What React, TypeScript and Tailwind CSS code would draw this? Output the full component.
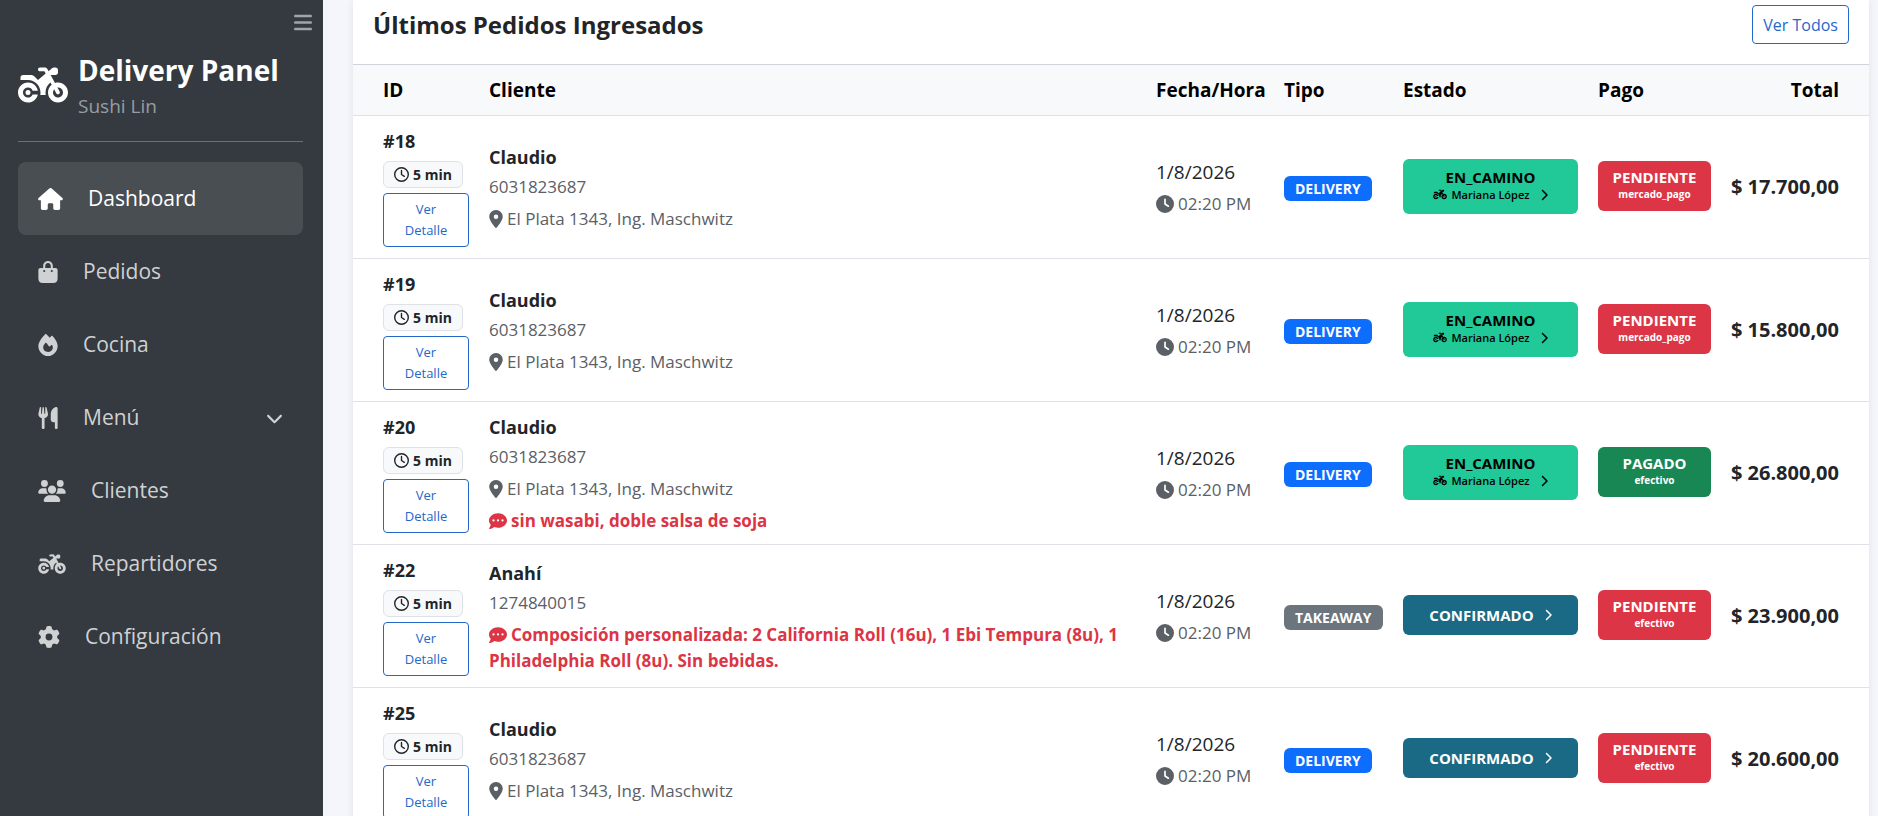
import {
  FaBagShopping,
  FaBars,
  FaChevronDown,
  FaChevronRight,
  FaClock,
  FaCommentDots,
  FaFire,
  FaGear,
  FaHouse,
  FaLocationDot,
  FaMotorcycle,
  FaRegClock,
  FaUsers,
  FaUtensils,
} from "react-icons/fa6"
import type { IconType } from "react-icons"

type MenuItem = {
  label: string
  href: string
  icon: IconType
  iconClass: string
  active?: boolean
  expandable?: boolean
}

type Order = {
  id: number
  client: string
  phone: string
  address?: string
  note?: string
  type: "DELIVERY" | "TAKEAWAY"
  status: "EN_CAMINO" | "CONFIRMADO"
  rider?: string
  payment: "PENDIENTE" | "PAGADO"
  method: string
  total: string
}

const menu: MenuItem[] = [
  { label: "Dashboard", href: "#dashboard", icon: FaHouse, iconClass: "w-[25px]", active: true },
  { label: "Pedidos", href: "#pedidos", icon: FaBagShopping, iconClass: "w-5" },
  { label: "Cocina", href: "#cocina", icon: FaFire, iconClass: "w-5" },
  { label: "Menú", href: "#menu", icon: FaUtensils, iconClass: "w-5", expandable: true },
  { label: "Clientes", href: "#clientes", icon: FaUsers, iconClass: "w-7" },
  { label: "Repartidores", href: "#repartidores", icon: FaMotorcycle, iconClass: "w-7" },
  { label: "Configuración", href: "#configuracion", icon: FaGear, iconClass: "w-[22px]" },
]

const orders: Order[] = [
  {
    id: 18,
    client: "Claudio",
    phone: "6031823687",
    address: "El Plata 1343, Ing. Maschwitz",
    type: "DELIVERY",
    status: "EN_CAMINO",
    rider: "Mariana López",
    payment: "PENDIENTE",
    method: "mercado_pago",
    total: "$ 17.700,00",
  },
  {
    id: 19,
    client: "Claudio",
    phone: "6031823687",
    address: "El Plata 1343, Ing. Maschwitz",
    type: "DELIVERY",
    status: "EN_CAMINO",
    rider: "Mariana López",
    payment: "PENDIENTE",
    method: "mercado_pago",
    total: "$ 15.800,00",
  },
  {
    id: 20,
    client: "Claudio",
    phone: "6031823687",
    address: "El Plata 1343, Ing. Maschwitz",
    note: "sin wasabi, doble salsa de soja",
    type: "DELIVERY",
    status: "EN_CAMINO",
    rider: "Mariana López",
    payment: "PAGADO",
    method: "efectivo",
    total: "$ 26.800,00",
  },
  {
    id: 22,
    client: "Anahí",
    phone: "1274840015",
    note: "Composición personalizada: 2 California Roll (16u), 1 Ebi Tempura (8u), 1 Philadelphia Roll (8u). Sin bebidas.",
    type: "TAKEAWAY",
    status: "CONFIRMADO",
    payment: "PENDIENTE",
    method: "efectivo",
    total: "$ 23.900,00",
  },
  {
    id: 25,
    client: "Claudio",
    phone: "6031823687",
    address: "El Plata 1343, Ing. Maschwitz",
    type: "DELIVERY",
    status: "CONFIRMADO",
    payment: "PENDIENTE",
    method: "efectivo",
    total: "$ 20.600,00",
  },
]

function Sidebar() {
  return (
    <aside className="w-[323px] shrink-0 bg-[#343a40] pr-5 pl-[18px] text-white">

      <div className="-mr-[9px] flex h-11 items-center justify-end">
        <button type="button" aria-label="Contraer menú" className="text-[#a1a5a9]">
          <FaBars className="h-[21px] w-[18px]" />
        </button>
      </div>

      {/* Logo */}
      <div className="flex h-[98px] items-center gap-2.5 border-b border-[#6c7177] pt-1 pb-5">
        <FaMotorcycle className="h-10 w-[50px] shrink-0" />
        <div className="pt-1.5">
          <h1 className="text-[28px] leading-9 font-bold whitespace-nowrap">Delivery Panel</h1>
          <p className="text-[19px] leading-9 text-[#9a9da0]">Sushi Lin</p>
        </div>
      </div>

      {/* Navigation */}
      <nav className="mt-5 flex flex-col">
        {menu.map(({ label, href, icon: Icon, iconClass, active, expandable }) => (
          <a
            key={label}
            href={href}
            className={
              active
                ? "flex h-[73px] items-center gap-[25px] rounded-lg bg-[#494e53] px-5 text-[21px] text-white"
                : "flex h-[73px] items-center gap-[25px] rounded-lg px-5 text-[21px] text-[#d0d1d3]"
            }
          >
            <Icon className={`h-[22px] shrink-0 ${iconClass}`} />
            {label}
            {expandable && <FaChevronDown className="ml-auto h-5 w-[17px]" />}
          </a>
        ))}
      </nav>

    </aside>
  )
}

function StatusButton({ status, rider }: { status: Order["status"]; rider?: string }) {
  if (status === "EN_CAMINO") {
    return (
      <button type="button" className="flex h-[55px] w-full flex-col items-center justify-center rounded-md bg-[#20c997] text-black">
        <span className="text-[15px] leading-[17px] font-bold">EN_CAMINO</span>
        <span className="flex items-center text-[11px] leading-[17px] font-semibold">
          <FaMotorcycle className="mr-1 h-[11px] w-3.5" />
          {rider}
          <FaChevronRight className="ml-2.5 h-3 w-2" />
        </span>
      </button>
    )
  }

  return (
    <button type="button" className="flex h-10 w-full items-center justify-center gap-2.5 rounded-md bg-[#1a6985] text-[15px] font-bold text-white">
      {status}
      <FaChevronRight className="h-3 w-2" />
    </button>
  )
}

function OrderRow({ order }: { order: Order }) {
  return (
    <tr className="border-b border-[#dee2e6]">
      <td className="pt-2.5 pr-2.5 pb-[11px] pl-[30px]">
        <div className="text-lg leading-[30px] font-bold">#{order.id}</div>
        <div className="mt-[5px] flex h-[27px] w-20 items-center justify-center gap-1 rounded-md border border-[#dee2e6] bg-[#f8f9fa] text-sm font-bold">
          <FaRegClock className="size-[15px]" />
          5 min
        </div>
        <button type="button" className="mt-[5px] h-[54px] w-full rounded border border-[#2468c9] px-3 text-[13px] leading-[21px] text-[#2468c9]">
          Ver Detalle
        </button>
      </td>

      <td className="px-2.5">
        <div className="text-lg leading-[30px] font-bold">{order.client}</div>
        <div className="mt-0.5 text-[17px] leading-[26px] text-[#5b6066]">{order.phone}</div>
        {order.address && (
          <div className="mt-1.5 flex items-center gap-1 text-[17px] leading-[26px] text-[#5b6066]">
            <FaLocationDot className="h-[18px] w-3.5" />
            {order.address}
          </div>
        )}
        {order.note && (
          <div className="mt-1.5 text-[17px] leading-[26px] font-bold text-[#dc3545]">
            <FaCommentDots className="mr-1 inline size-[18px] align-[-3px]" />
            {order.note}
          </div>
        )}
      </td>

      <td className="px-2.5 whitespace-nowrap">
        <div className="leading-[30px]">1/8/2026</div>
        <div className="mt-1 flex items-center gap-1 text-[17px] leading-[26px] text-[#5b6066]">
          <FaClock className="size-[18px]" />
          02:20 PM
        </div>
      </td>

      <td className="px-2.5">
        <span
          className={
            order.type === "DELIVERY"
              ? "inline-flex h-[25px] items-center rounded-md bg-[#0d6efd] px-[11px] text-sm font-bold text-white"
              : "inline-flex h-[25px] items-center rounded-md bg-[#6c757d] px-[11px] text-sm font-bold text-white"
          }
        >
          {order.type}
        </span>
      </td>

      <td className="px-2.5 pb-0.5">
        <StatusButton status={order.status} rider={order.rider} />
      </td>

      <td className="px-2.5 pb-0.5">
        <div
          className={
            order.payment === "PAGADO"
              ? "flex h-[50px] flex-col items-center justify-center rounded-md bg-[#198754] font-bold text-white"
              : "flex h-[50px] flex-col items-center justify-center rounded-md bg-[#dc3545] font-bold text-white"
          }
        >
          <span className="text-[15px] leading-[17px]">{order.payment}</span>
          <span className="text-[10px] leading-[17px]">{order.method}</span>
        </div>
      </td>

      <td className="pr-[30px] text-right text-xl font-bold whitespace-nowrap">{order.total}</td>
    </tr>
  )
}

function App() {
  return (
    <div className="flex h-screen overflow-hidden bg-[#f4f6fb] font-['Open_Sans',sans-serif] text-[#212529]">

      <Sidebar />

      <main className="min-w-0 flex-1 pr-[9px] pl-[30px]">
        <section className="bg-white shadow-[0_0_8px_rgba(0,0,0,0.08)]">

          <div className="flex items-center justify-between px-5 pt-[5px] pb-5">
            <h2 className="text-2xl font-bold">Últimos Pedidos Ingresados</h2>
            <a href="#pedidos" className="flex h-[39px] items-center rounded border border-[#2468c9] px-2.5 text-base text-[#2468c9]">
              Ver Todos
            </a>
          </div>

          <table className="w-full table-fixed border-collapse text-[19px]">
            <colgroup>
              <col className="w-[126px]" />
              <col />
              <col className="w-32" />
              <col className="w-[119px]" />
              <col className="w-[195px]" />
              <col className="w-[133px]" />
              <col className="w-[148px]" />
            </colgroup>
            <thead>
              <tr className="h-[51px] border-t border-b border-t-[#ced4da] border-b-[#dee2e6] bg-[#f8f9fa] text-left text-black">
                <th className="pl-[30px]">ID</th>
                <th className="px-2.5">Cliente</th>
                <th className="px-2.5">Fecha/Hora</th>
                <th className="px-2.5">Tipo</th>
                <th className="px-2.5">Estado</th>
                <th className="px-2.5">Pago</th>
                <th className="pr-[30px] text-right">Total</th>
              </tr>
            </thead>
            <tbody>
              {orders.map((order) => (
                <OrderRow key={order.id} order={order} />
              ))}
            </tbody>
          </table>

        </section>
      </main>

    </div>
  )
}

export default App
